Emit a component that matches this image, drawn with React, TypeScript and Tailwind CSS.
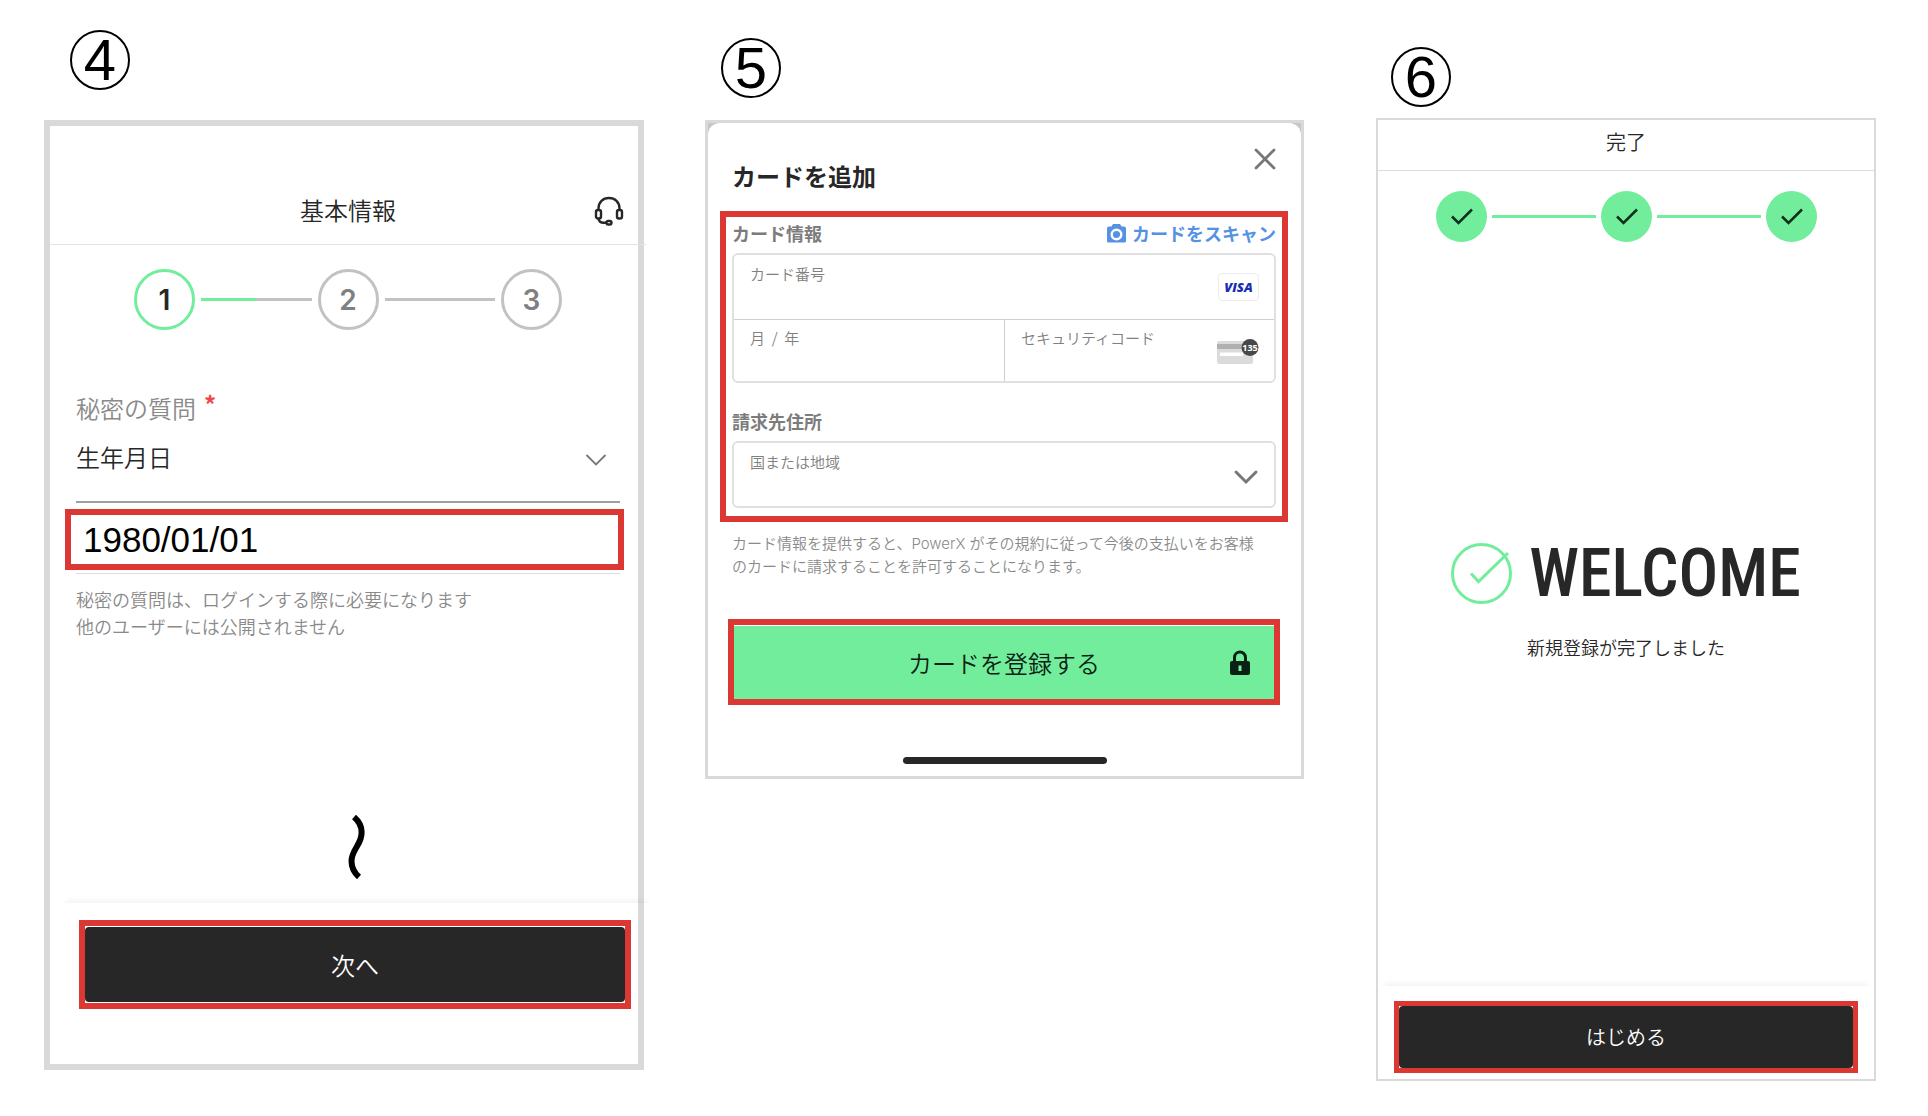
import { useState } from "react";

const chevron = "pointer-events-none absolute top-1/2 -translate-y-1/2";

function StepNumber({ children, className }: { children: string; className: string }) {
  return (
    <h2
      className={`flex size-[60px] items-center justify-center rounded-full border-2 border-black font-['Liberation_Sans',sans-serif] text-[58px] leading-[60px] font-normal text-black ${className}`}
    >
      {children}
    </h2>
  );
}

function BasicInfo() {
  const [answer, setAnswer] = useState("1980/01/01");

  return (
    <section className="flex-[600] pt-[30px]">
      <StepNumber className="ml-[26px]">4</StepNumber>

      <div className="mt-[30px] border-6 border-[#d9d9d9]">
        <div className="-mr-2">
          <header className="relative border-b border-[#e2e2e2] pt-[68px] pb-[18px] text-center">
            <h3 className="text-2xl leading-8">基本情報</h3>
            <button type="button" aria-label="サポート" className="absolute right-[21px] bottom-[17px]">
              <svg width="32" height="32" viewBox="0 0 32 32" fill="none" stroke="#272727" strokeWidth="2.400">
                <path d="M5.500 16v-2.500C5.500 7 10 3 16 3s10.500 4 10.500 10.500V16" />
                <rect x="3" y="15" width="5" height="8.500" rx="2" />
                <rect x="24" y="15" width="5" height="8.500" rx="2" />
                <path d="M5.500 23.500c.5 3 2.500 4.300 5 4.300h3" />
                <rect x="13.500" y="26" width="5" height="3.500" rx="1.700" />
              </svg>
            </button>
          </header>

          <ol className="flex items-center px-[84px] pt-6 font-[Inter,sans-serif] text-[28px] font-semibold text-[#808080]">
            <li className="flex size-[61px] items-center justify-center rounded-full border-3 border-[#72ed9b] text-[#272727]">
              1
            </li>
            <li aria-hidden="true" className="mx-1.5 flex h-[3px] flex-1 bg-[#c2c2c2]">
              <span className="w-1/2 bg-[#72ed9b]" />
            </li>
            <li className="flex size-[61px] items-center justify-center rounded-full border-3 border-[#c2c2c2]">2</li>
            <li aria-hidden="true" className="mx-1.5 h-[3px] flex-1 bg-[#c2c2c2]" />
            <li className="flex size-[61px] items-center justify-center rounded-full border-3 border-[#c2c2c2]">3</li>
          </ol>

          <form className="mt-[62px] px-[26px]">
            <label htmlFor="question" className="flex gap-2 text-2xl leading-8 text-[#8a8a8a]">
              秘密の質問
              <span className="-mt-1 font-bold text-[#f04848]">*</span>
            </label>
            <div className="relative mt-[5px]">
              <select
                id="question"
                className="h-[74px] w-full appearance-none border-b-2 border-[#a0a0a0] bg-transparent pb-4 text-2xl"
              >
                <option>生年月日</option>
              </select>
              <svg className={`${chevron} right-3 -mt-1.5`} width="24" height="14" viewBox="0 0 24 14" fill="none" stroke="#777" strokeWidth="1.800">
                <path d="M2.500 2 12 11.500 21.500 2" />
              </svg>
            </div>
            <input
              aria-label="秘密の質問の答え"
              value={answer}
              onChange={(e) => setAnswer(e.target.value)}
              className="mt-1.5 -ml-[11px] block h-[61px] w-[calc(100%+15px)] border-6 border-[#dc3833] pl-3 font-['Liberation_Sans',sans-serif] text-[35px] font-normal text-black outline-none"
            />
            <p className="mt-[3px] border-t border-[#dedede] pt-3 text-lg leading-[27px] text-[#8a8a8a]">
              秘密の質問は、ログインする際に必要になります
              <br />
              他のユーザーには公開されません
            </p>
          </form>
        </div>

        <footer className="-mr-4 ml-2.5 text-center">
          <svg className="mx-auto mt-[175px]" width="20" height="64" viewBox="0 0 20 64" fill="none" stroke="#000" strokeWidth="6">
            <path d="M7 2c7 6 9 14 6.500 22S4.500 37 4.500 46c0 7 3 12 7.500 16" />
          </svg>
          <div className="mt-6 pt-[17px] pr-[23px] pb-[55px] pl-[19px] shadow-[0_-8px_6px_-6px_rgba(0,0,0,0.06)]">
            <div className="border-6 border-[#dc3833] py-px">
              <button type="button" className="block h-[75px] w-full rounded-sm bg-[#272727] text-2xl text-white">
                次へ
              </button>
            </div>
          </div>
        </footer>
      </div>
    </section>
  );
}

function CardForm() {
  return (
    <section className="ml-[61px] flex-[599] pt-[38px]">
      <StepNumber className="ml-4">5</StepNumber>

      <div className="mt-[22px] border-3 border-[#d9d9d9] bg-[#c8c8c8]">
        <form className="rounded-t-xl bg-white pb-3">
          <header className="flex items-start justify-between pt-6 pr-6 pl-6">
            <h3 className="mt-[13px] text-2xl leading-8 font-bold">カードを追加</h3>
            <button type="button" aria-label="閉じる">
              <svg width="24" height="24" viewBox="0 0 24 24" fill="none" stroke="#777" strokeWidth="2.800" strokeLinecap="round">
                <path d="m3 3 18 18M21 3 3 21" />
              </svg>
            </button>
          </header>

          <div className="mt-[19px] mr-[13px] ml-3 border-6 border-[#dc3833] px-1.5 pt-1 pb-2">
            <div className="flex items-center justify-between text-lg leading-6 font-bold">
              <h4 className="text-[#7c7c7c]">カード情報</h4>
              <button type="button" className="flex items-center gap-1.5 text-[#5592e4]">
                <svg width="19" height="20" viewBox="0 0 19 20" fill="#5592e4">
                  <path d="M6 1h7l1.500 2.500H17a2 2 0 0 1 2 2V18a1.500 1.500 0 0 1-1.500 1.500h-16A1.500 1.500 0 0 1 0 18V5.500a2 2 0 0 1 2-2h2.500z" />
                  <circle cx="9.500" cy="11.500" r="4.800" fill="none" stroke="#fff" strokeWidth="2.400" />
                </svg>
                カードをスキャン
              </button>
            </div>

            <div className="mt-2 rounded-md border-2 border-[#e0e0e0] text-[15px] leading-5 text-[#808080]">
              <div className="flex h-[65px] items-center border-b border-[#cfcfcf] pr-[15px]">
                <label className="flex h-full flex-1 flex-col pt-[9px] pl-4">
                  カード番号
                  <input inputMode="numeric" className="w-full outline-none" />
                </label>
                <span className="flex h-7 w-[41px] items-center justify-center rounded-sm border border-[#ececec] font-['Open_Sans',sans-serif] text-[13px] font-extrabold text-[#1a2db5] italic">
                  VISA
                </span>
              </div>
              <div className="flex h-[61px]">
                <label className="flex flex-1 flex-col border-r border-[#cfcfcf] pt-2 pl-4">
                  月&nbsp; /&nbsp; 年
                  <input inputMode="numeric" className="w-full outline-none" />
                </label>
                <div className="flex flex-1 items-center pr-[15px]">
                  <label className="flex h-full flex-1 flex-col pt-2 pl-4">
                    セキュリティコード
                    <input inputMode="numeric" className="w-full outline-none" />
                  </label>
                  <svg width="42" height="28" viewBox="0 0 42 28">
                    <rect x="0" y="4" width="36" height="23" rx="2" fill="#dbdbdb" />
                    <rect x="0" y="7" width="36" height="5" fill="#b0b0b0" />
                    <rect x="3" y="15.500" width="23" height="3.500" fill="#fff" />
                    <circle cx="33" cy="10.500" r="8.500" fill="#484848" />
                    <text x="33" y="14" textAnchor="middle" fill="#fff" className="font-['Open_Sans',sans-serif] text-[9px] font-bold">
                      135
                    </text>
                  </svg>
                </div>
              </div>
            </div>

            <h4 className="mt-[26px] text-lg leading-6 font-bold text-[#7c7c7c]">請求先住所</h4>
            <div className="relative mt-2 h-[67px] rounded-md border-2 border-[#e0e0e0] text-[15px] leading-5 text-[#808080]">
              <label htmlFor="region" className="block pt-[9px] pl-4">
                国または地域
              </label>
              <select id="region" className="block h-[30px] w-full appearance-none bg-transparent pl-4 outline-none">
                <option></option>
              </select>
              <svg className={`${chevron} right-[15px] mt-0.5`} width="26" height="16" viewBox="0 0 26 16" fill="none" stroke="#777" strokeWidth="3" strokeLinecap="round">
                <path d="M3 3 13 13 23 3" />
              </svg>
            </div>
          </div>

          <p className="mt-2.5 pl-6 font-[Inter,'Noto_Sans_CJK_JP',sans-serif] text-[15px] leading-[23px] whitespace-nowrap text-[#8a8a8a]">
            カード情報を提供すると、PowerX がその規約に従って今後の支払いをお客様
            <br />
            のカードに請求することを許可することになります。
          </p>

          <div className="mt-[41px] mr-[21px] ml-5 border-6 border-[#dc3833] pt-px">
            <button type="button" className="relative block h-[73px] w-full bg-[#72ed9b] text-2xl text-[#0a2215]">
              カードを登録する
              <svg className={`${chevron} right-6`} width="20" height="26" viewBox="0 0 20 26" fill="#0a2215">
                <path d="M4.500 12V7.500a5.500 5.500 0 0 1 11 0V12" fill="none" stroke="#0a2215" strokeWidth="3" />
                <path fillRule="evenodd" d="M2 11h16a2 2 0 0 1 2 2v10a2 2 0 0 1-2 2H2a2 2 0 0 1-2-2V13a2 2 0 0 1 2-2zm6.500 4.500v5.500h3v-5.500z" />
              </svg>
            </button>
          </div>

          <div className="mx-auto mt-[52px] h-[7px] w-[204px] rounded-full bg-[#272727]" />
        </form>
      </div>
    </section>
  );
}

function DoneStep() {
  return (
    <li className="flex size-[51px] items-center justify-center rounded-full bg-[#72ed9b]">
      <svg width="24" height="20" viewBox="0 0 24 20" fill="none" stroke="#10301e" strokeWidth="2.500">
        <path d="m2 9.500 6.500 6.500L22 2.500" />
      </svg>
    </li>
  );
}

function Complete() {
  return (
    <section className="ml-[72px] flex-[500] pt-[47px]">
      <StepNumber className="ml-[15px]">6</StepNumber>

      <div className="mt-[11px] border-2 border-[#d9d9d9]">
        <h3 className="border-b border-[#dcdcdc] pt-2 pb-3.5 text-center text-xl leading-7">完了</h3>

        <ol className="mt-5 flex items-center pr-[57px] pl-[58px]">
          <DoneStep />
          <li aria-hidden="true" className="mx-[5px] h-[3px] flex-1 bg-[#72ed9b]" />
          <DoneStep />
          <li aria-hidden="true" className="mx-[5px] h-[3px] flex-1 bg-[#72ed9b]" />
          <DoneStep />
        </ol>

        <div className="mt-[301px] flex items-center justify-center gap-4">
          <svg width="62" height="61" viewBox="0 0 62 61" fill="none" stroke="#72ed9b" strokeWidth="3">
            <circle cx="30.500" cy="30.500" r="29" />
            <path d="m20 30.500 7.500 8L57 10" />
          </svg>
          <strong className="font-['Roboto_Condensed','Liberation_Sans_Narrow','DejaVu_Sans_Condensed',sans-serif] text-[66px] leading-[61px] font-medium">
            WELCOME
          </strong>
        </div>
        <p className="mt-[31px] text-center text-lg leading-6">新規登録が完了しました</p>

        <footer className="mt-[327px] px-4 pt-[15px] pb-1.5 shadow-[0_-8px_6px_-6px_rgba(0,0,0,0.06)]">
          <div className="border-5 border-[#dc3833]">
            <button type="button" className="block h-[62px] w-full rounded-sm bg-[#272727] text-xl text-white">
              はじめる
            </button>
          </div>
        </footer>
      </div>
    </section>
  );
}

export default function App() {
  return (
    <main className="flex items-start bg-white pr-[52px] pb-9 pl-11 font-['Noto_Sans_CJK_JP',sans-serif] font-[350] text-[#272727]">
      <BasicInfo />
      <CardForm />
      <Complete />
    </main>
  );
}
